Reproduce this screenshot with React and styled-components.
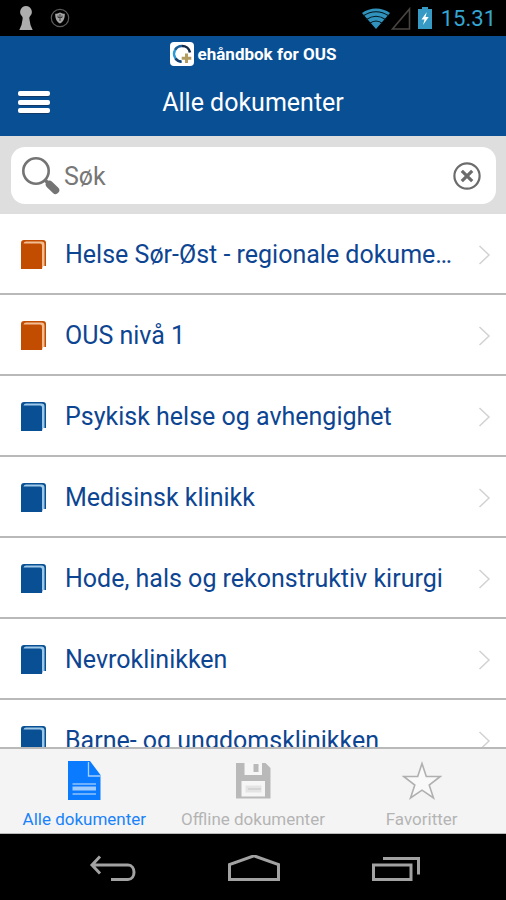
import React, { useState } from 'react';
import styled, { createGlobalStyle } from 'styled-components';

const GlobalStyle = createGlobalStyle`
  * {
    box-sizing: border-box;
  }
  body {
    margin: 0;
    font-family: Roboto, "Noto Sans", sans-serif;
  }
  button {
    font-family: inherit;
    background: none;
    border: none;
    padding: 0;
    cursor: pointer;
  }
  svg {
    display: block;
    flex: none;
  }
`;

const Screen = styled.div`
  display: flex;
  flex-direction: column;
  height: 100vh;
  background: #fff;
`;

const StatusBar = styled.div`
  display: flex;
  justify-content: space-between;
  align-items: center;
  height: 36px;
  flex: none;
  padding: 0 10px 0 18px;
  background: #000;
`;

const StatusGroup = styled.div`
  display: flex;
  align-items: center;
  gap: ${(props) => props.$gap};
`;

const Clock = styled.span`
  color: #35a7d3;
  font-size: 22px;
  line-height: 32px;
  margin-left: 2px;
  padding-top: 2px;
`;

const Header = styled.header`
  flex: none;
  height: 100px;
  background: #084f94;
  color: #fff;
`;

const Brand = styled.div`
  display: flex;
  justify-content: center;
  align-items: center;
  gap: 4px;
  height: 36px;
  font-size: 17px;
  font-weight: 700;
`;

const TitleRow = styled.div`
  display: grid;
  grid-template-columns: 68px 1fr 68px;
  align-items: center;
  height: 60px;
`;

const MenuButton = styled.button`
  display: flex;
  justify-content: center;
`;

const Title = styled.h1`
  margin: 0;
  font-size: 25px;
  font-weight: 400;
  text-align: center;
`;

const SearchBar = styled.div`
  flex: none;
  padding: 11px 10px 10px 11px;
  background: #dedede;
`;

const SearchField = styled.label`
  display: flex;
  align-items: center;
  gap: 4px;
  height: 57px;
  padding: 0 15px 0 10px;
  border-radius: 14px;
  background: #fff;
`;

const SearchInput = styled.input`
  flex: 1;
  min-width: 0;
  padding: 2px 0 0;
  border: none;
  outline: none;
  background: transparent;
  font-family: inherit;
  font-size: 25px;
  color: #444;

  &::placeholder {
    color: #777;
    opacity: 1;
  }
`;

const List = styled.ul`
  flex: 1;
  min-height: 0;
  margin: 0;
  padding: 0;
  list-style: none;
  overflow: hidden;
`;

const Item = styled.li`
  border-bottom: 2px solid #b9b9b9;
`;

const ItemLink = styled.a`
  display: flex;
  align-items: center;
  height: 79px;
  padding: 2px 15px 0 20px;
  color: #0d4592;
  text-decoration: none;
`;

const ItemText = styled.span`
  flex: 1;
  min-width: 0;
  margin: 0 20px 0 18px;
  font-size: 25px;
  line-height: 32px;
  white-space: nowrap;
  overflow: hidden;
  text-overflow: ellipsis;
`;

const TabBar = styled.nav`
  display: grid;
  grid-template-columns: repeat(3, 1fr);
  flex: none;
  height: 87px;
  border-top: 2px solid #b9b9b9;
  border-bottom: 1px solid #b9b9b9;
  background: #f4f4f4;
`;

const Tab = styled.button`
  display: flex;
  flex-direction: column;
  align-items: center;
  gap: 9px;
  padding-top: 12px;
  font-size: 17px;
  line-height: 20px;
  white-space: nowrap;
  color: ${(props) => (props.$active ? '#1a82fb' : '#b4b4b4')};
`;

const NavBar = styled.div`
  display: flex;
  justify-content: center;
  align-items: center;
  gap: 90px;
  flex: none;
  height: 66px;
  padding: 4px 0 0 4px;
  background: #000;
`;

const KeyholeIcon = () => (
  <svg width="16" height="26" viewBox="0 0 16 26">
    <path d="M8 1a6 6 0 0 1 4 10.300q-1 1-.6 2.700L12.500 20l2.200 5H1.300l2.200-5L4.600 14q.4-1.700-.6-2.700A6 6 0 0 1 8 1z" fill="#adadad" />
  </svg>
);

const ShieldIcon = () => (
  <svg width="20" height="20" viewBox="0 0 20 20" fill="none">
    <circle cx="10" cy="10" r="8.700" stroke="#5a5a5a" strokeWidth="1.200" />
    <path d="M10 4.500c1.500 1 3 1.300 4.800 1.300 0 4.500-1 7.700-4.800 9.700-3.800-2-4.800-5.200-4.800-9.700 1.800 0 3.300-.3 4.800-1.300z" fill="#a6a6a6" />
    <path d="M8 7.500v2h4v-2M10 6v7" stroke="#3a3a3a" strokeWidth="1" />
  </svg>
);

const WifiIcon = () => (
  <svg width="30" height="24" viewBox="0 0 30 24">
    <path d="M1 7C9 1 21 1 29 7L15 23z" fill="#2f93bd" />
    <path d="M2 10q13-8.500 26 0M5 13.700q10-7 20 0M8.500 17.500q6.500-5 13 0" fill="none" stroke="#04141c" strokeWidth="1.100" />
  </svg>
);

const SignalIcon = () => (
  <svg width="20" height="24" viewBox="0 0 20 24">
    <path d="M18.500 3v20H1.500z" fill="none" stroke="#484440" strokeWidth="1.600" />
  </svg>
);

const BatteryIcon = () => (
  <svg width="16" height="24" viewBox="0 0 16 24">
    <path d="M5 1h6v2h4v20H1V3h4z" fill="#369ac4" />
    <path d="M9.800 6L4.500 13.500h3L6 19l5.700-8H8.500z" fill="#fff" />
  </svg>
);

const Logo = () => (
  <svg width="24" height="24" viewBox="0 0 24 24" fill="none">
    <rect width="24" height="24" rx="4" fill="#fff" />
    <path d="M11.500 19.700A8 8 0 0 1 5 8" stroke="#2a9bd6" strokeWidth="2.400" />
    <path d="M5 8A8 8 0 0 1 12 4" stroke="#1c5f96" strokeWidth="2.600" />
    <path d="M12 4a8 8 0 0 1 8 6.500" stroke="#152949" strokeWidth="2.600" />
    <path d="M5.500 16.500a8 8 0 0 0 6 3.200" stroke="#1b3f6c" strokeWidth="2.400" />
    <path d="M16.500 11.500v9.500M11.700 16.200h9.600" stroke="#b39c62" strokeWidth="3" />
  </svg>
);

const MenuIcon = () => (
  <svg width="32" height="24" viewBox="0 0 32 24">
    <g fill="#123a68">
      <rect x="1" y="2" width="31" height="5" rx="2" />
      <rect x="1" y="11" width="31" height="5" rx="2" />
      <rect x="1" y="19" width="31" height="5" rx="2" />
    </g>
    <g fill="#fff">
      <rect x="0" y="1" width="32" height="5" rx="2" />
      <rect x="0" y="10" width="32" height="5" rx="2" />
      <rect x="0" y="18" width="32" height="5" rx="2" />
    </g>
  </svg>
);

const SearchIcon = () => (
  <svg width="39" height="39" viewBox="0 0 39 39" fill="none" stroke="#747474">
    <circle cx="15" cy="15" r="12.700" strokeWidth="2.600" />
    <path d="M24 24l4 4" strokeWidth="3.500" />
    <path d="M28.500 28.500l6 5.700" strokeWidth="7.500" strokeLinecap="round" />
  </svg>
);

const ClearIcon = () => (
  <svg width="28" height="28" viewBox="0 0 28 28" fill="none" stroke="#6c6c6c">
    <circle cx="14" cy="14" r="12.600" strokeWidth="2.200" />
    <path d="M8.800 8.800l10.400 10.400M19.200 8.800L8.800 19.200" strokeWidth="3.200" />
  </svg>
);

const BookIcon = ({ color, light }) => (
  <svg width="27" height="31" viewBox="0 0 27 31">
    <path d="M4 1h19q3 0 3 3v23h-3.500L22 30H1V4Q1 1 4 1z" fill={color} />
    <path d="M3.500 4.600Q4 2.600 6 2.600h15.500q3 0 3 3V27H22V6.600q0-2-2-2z" fill={light} />
  </svg>
);

const ChevronIcon = () => (
  <svg width="13" height="20" viewBox="0 0 13 20">
    <path d="M1.500 1l9.500 9-9.500 9" fill="none" stroke="#d2d2d2" strokeWidth="1.500" />
  </svg>
);

const DocumentIcon = () => (
  <svg width="34" height="39" viewBox="0 0 34 39">
    <path d="M1 0h22l10.500 14v25H1z" fill="#0a7bff" />
    <path d="M21.500 1v14h12" fill="none" stroke="#a9d0fb" strokeWidth="1.300" />
    <path d="M5.500 23h23.500M5.500 33h23.500" stroke="#6fb0fd" strokeWidth="2" />
    <path d="M5.500 27.500h23.500" stroke="#9fcbfc" strokeWidth="4" />
  </svg>
);

const FloppyIcon = () => (
  <svg width="36" height="39" viewBox="0 0 36 39">
    <path d="M1 2h29.500l5 5v30.500H1z" fill="#b9b9b9" />
    <path d="M9.500 2h17.500v12H9.500zM6.500 20h23.500v15.500H6.500z" fill="#f6f6f6" />
    <path d="M18.500 3h5v8h-5z" fill="#b9b9b9" />
    <path d="M10.500 24.500h16v7h-16z" fill="#e4e4e4" />
    <path d="M13 28h13" stroke="#cfcfcf" strokeWidth="1.500" />
  </svg>
);

const StarIcon = () => (
  <svg width="40" height="39" viewBox="0 0 40 39">
    <path
      d="M20 2.500l4.300 13h14L27.200 24l4.300 13L20 29.200 8.500 37l4.300-13L1.700 15.500h14z"
      fill="#f9f9f9"
      stroke="#b0b0b0"
      strokeWidth="1.600"
    />
  </svg>
);

const BackIcon = () => (
  <svg width="48" height="28" viewBox="0 0 48 28" fill="none" stroke="#a2a2a2" strokeWidth="3">
    <path d="M11 1.500L3 10l8 8.500M3 10h36c8 0 8 14.500 0 14.500H22" />
  </svg>
);

const HomeIcon = () => (
  <svg width="54" height="28" viewBox="0 0 54 28" fill="none" stroke="#a2a2a2" strokeWidth="3">
    <path d="M2.500 24.500V9.500L27 0.800l24.500 8.700V24.500z" />
  </svg>
);

const RecentIcon = () => (
  <svg width="50" height="28" viewBox="0 0 50 28" fill="none" stroke="#a2a2a2" strokeWidth="3">
    <path d="M2.500 10h37.500v14.500H2.500zM12 3.500h35.500V19.500" />
  </svg>
);

const ORANGE = { color: '#c24d00', light: '#f3bd93' };
const BLUE = { color: '#084f94', light: '#9fc9e8' };

const documents = [
  { name: 'Helse Sør-Øst - regionale dokumenter', book: ORANGE },
  { name: 'OUS nivå 1', book: ORANGE },
  { name: 'Psykisk helse og avhengighet', book: BLUE },
  { name: 'Medisinsk klinikk', book: BLUE },
  { name: 'Hode, hals og rekonstruktiv kirurgi', book: BLUE },
  { name: 'Nevroklinikken', book: BLUE },
  { name: 'Barne- og ungdomsklinikken', book: BLUE },
];

const tabs = [
  { name: 'Alle dokumenter', Icon: DocumentIcon },
  { name: 'Offline dokumenter', Icon: FloppyIcon },
  { name: 'Favoritter', Icon: StarIcon },
];

const App = () => {
  const [query, setQuery] = useState('');
  const [active, setActive] = useState(0);

  return (
    <Screen>
      <GlobalStyle />
      <StatusBar>
        <StatusGroup $gap="16px">
          <KeyholeIcon />
          <ShieldIcon />
        </StatusGroup>
        <StatusGroup $gap="6px">
          <StatusGroup $gap="0">
            <WifiIcon />
            <SignalIcon />
          </StatusGroup>
          <BatteryIcon />
          <Clock>15.31</Clock>
        </StatusGroup>
      </StatusBar>

      <Header>
        <Brand>
          <Logo />
          ehåndbok for OUS
        </Brand>
        <TitleRow>
          <MenuButton aria-label="Meny">
            <MenuIcon />
          </MenuButton>
          <Title>Alle dokumenter</Title>
        </TitleRow>
      </Header>

      <SearchBar>
        <SearchField>
          <SearchIcon />
          <SearchInput
            type="text"
            placeholder="Søk"
            aria-label="Søk"
            value={query}
            onChange={(e) => setQuery(e.target.value)}
          />
          <button type="button" aria-label="Tøm" onClick={() => setQuery('')}>
            <ClearIcon />
          </button>
        </SearchField>
      </SearchBar>

      <List>
        {documents.map((doc) => (
          <Item key={doc.name}>
            <ItemLink href="#">
              <BookIcon color={doc.book.color} light={doc.book.light} />
              <ItemText>{doc.name}</ItemText>
              <ChevronIcon />
            </ItemLink>
          </Item>
        ))}
      </List>

      <TabBar>
        {tabs.map(({ name, Icon }, i) => (
          <Tab key={name} $active={i === active} onClick={() => setActive(i)}>
            <Icon />
            {name}
          </Tab>
        ))}
      </TabBar>

      <NavBar>
        <button aria-label="Tilbake">
          <BackIcon />
        </button>
        <button aria-label="Hjem">
          <HomeIcon />
        </button>
        <button aria-label="Siste apper">
          <RecentIcon />
        </button>
      </NavBar>
    </Screen>
  );
};

export default App;
